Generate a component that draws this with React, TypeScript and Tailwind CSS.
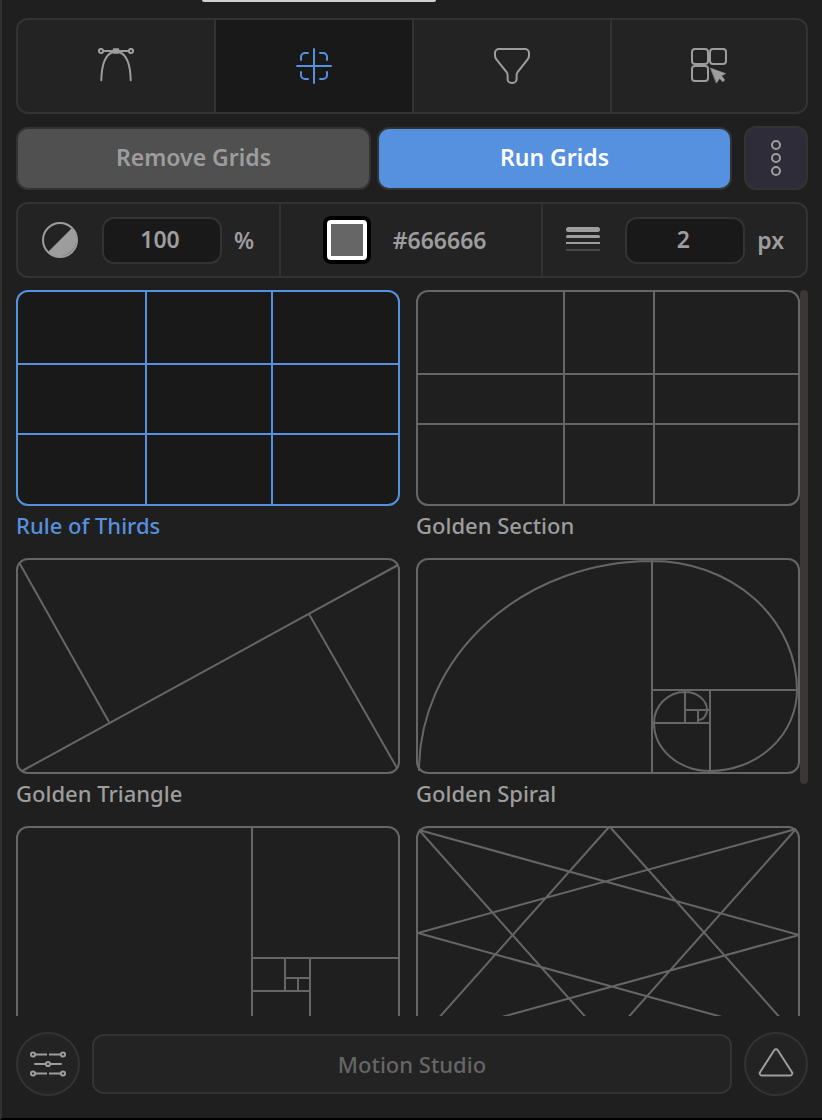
import { useState, type ReactNode } from 'react';
import clsx from 'clsx';

const stroke = { fill: 'none', stroke: 'currentColor', strokeWidth: 2, strokeLinecap: 'round', strokeLinejoin: 'round' } as const;

function Icon({ children }: { children: ReactNode }) {
  return (
    <svg viewBox="0 0 36 36" className="size-9 shrink-0" aria-hidden="true" {...stroke}>
      {children}
    </svg>
  );
}

const TABS = [
  {
    id: 'curves',
    label: 'Curves',
    icon: (
      <Icon>
        <path d="M5.5 3h25" />
        <circle cx="3" cy="3" r="2.1" />
        <circle cx="33" cy="3" r="2.1" />
        <rect x="15.8" y="1.2" width="4.4" height="3.6" />
        <path d="M3.3 32.2C3.6 17 7.5 6.5 15 4M32.7 32.2C32.4 17 28.5 6.5 21 4" />
      </Icon>
    ),
  },
  {
    id: 'grids',
    label: 'Grids',
    icon: (
      <Icon>
        <path d="M18 1v34M1 18h34" />
        <path d="M5 12V9a4 4 0 0 1 4-4h3M24 5h3a4 4 0 0 1 4 4v3M31 24v3a4 4 0 0 1-4 4h-3M12 31H9a4 4 0 0 1-4-4v-3" />
      </Icon>
    ),
  },
  {
    id: 'filter',
    label: 'Filter',
    icon: (
      <Icon>
        <path d="M5 1h26a4 4 0 0 1 4 4v2.5c0 1.5-.4 2.6-1.2 3.6L23.600 24.200c-.7.9-1 1.8-1 2.8v4a4 4 0 0 1-4 4h-1a4 4 0 0 1-4-4v-4c0-1-.3-1.9-1-2.8L2.200 11.100C1.400 10.100 1 9 1 7.500V5a4 4 0 0 1 4-4z" />
      </Icon>
    ),
  },
  {
    id: 'select',
    label: 'Select',
    icon: (
      <Icon>
        <rect x="1" y="1" width="16" height="15" rx="3" />
        <rect x="19" y="1" width="16" height="15" rx="3" />
        <rect x="1" y="18" width="16" height="15" rx="3" />
        <path
          d="M19.7 20.2 34.5 25.6 30.5 27.8 33.7 32 31.9 33.8 28.6 30.5 25.5 34.8z"
          fill="currentColor"
          strokeWidth="0.6"
        />
      </Icon>
    ),
  },
];

const GOLDEN_RECTS = 'M236 1V215M236 132H383M294 132V215M236 165H294M269 132V165M269 152H294M282 152V165';

const GRIDS = [
  { id: 'thirds', name: 'Rule of Thirds', d: 'M130 1V215M256 1V215M1 74H383M1 144H383' },
  { id: 'section', name: 'Golden Section', d: 'M148 1V215M238 1V215M1 84H383M1 134H383' },
  { id: 'triangle', name: 'Golden Triangle', d: 'M4 6L93 164M6 213L382 7M293 56L381 210' },
  {
    id: 'spiral',
    name: 'Golden Spiral',
    d:
      GOLDEN_RECTS +
      'M3 213A233 210 0 0 1 236 3A145 129 0 0 1 381 132A87 81 0 0 1 294 213A56 48 0 0 1 238 165A31 31 0 0 1 269 134A22 18 0 0 1 291 152A9 10 0 0 1 282 162',
  },
  { id: 'rectangles', d: GOLDEN_RECTS },
  {
    id: 'star',
    d: 'M3 4L383 109L6 213M380 3L2 107L382 212M193 1L4 213M194 1L383 213M3 4L190 214M380 3L192 214',
  },
];

function NumberField({ id, label, value, unit }: { id: string; label: string; value: number; unit: string }) {
  const [text, setText] = useState(String(value));
  return (
    <>
      <input
        id={id}
        aria-label={label}
        value={text}
        onChange={(e) => setText(e.target.value)}
        className="ml-6 h-[47px] w-[120px] rounded-xl border-2 border-[#333333] bg-[#191919] pr-1 pb-0.5 text-center outline-none"
      />
      <label htmlFor={id} className="ml-3">{unit}</label>
    </>
  );
}

export default function App() {
  const [tab, setTab] = useState('grids');
  const [grid, setGrid] = useState('thirds');

  return (
    <div className="relative flex h-screen flex-col border-b-2 border-l-2 border-b-black border-l-[#313131] bg-[#1f1f1f] px-3.5 pt-[18px] pb-[22px] font-['Noto_Sans',sans-serif] text-[22px] font-medium text-[#9d9d9d]">
      <div className="absolute top-0 left-[200px] h-0.5 w-[234px] rounded-b-sm bg-[#d0d0d0]" />

      <div role="tablist" className="grid h-24 shrink-0 grid-cols-4 rounded-xl bg-[#232323]">
        {TABS.map((item) => (
          <button
            key={item.id}
            role="tab"
            aria-label={item.label}
            aria-selected={tab === item.id}
            onClick={() => setTab(item.id)}
            className={clsx(
              'flex items-center justify-center border-y-2 border-l-2 border-[#333333] first:rounded-l-xl last:rounded-r-xl last:border-r-2',
              tab === item.id && 'bg-[#191919] text-[#5591de]',
            )}
          >
            {item.icon}
          </button>
        ))}
      </div>

      <div className="mt-3 flex shrink-0 items-end text-[23px] font-semibold">
        <button className="mr-1.5 h-[63px] flex-1 rounded-xl border-2 border-[#333333] bg-[#505050] pb-0.5">Remove Grids</button>
        <button className="mr-3 h-[63px] flex-1 rounded-xl border-2 border-[#333333] bg-[#5591de] pb-0.5 text-white">Run Grids</button>
        <button
          aria-label="More options"
          className="flex size-16 items-center justify-center rounded-xl border-2 border-[#333333] bg-[#2e2c38]"
        >
          <Icon>
            <circle cx="18" cy="5" r="4" />
            <circle cx="18" cy="18" r="4" />
            <circle cx="18" cy="31" r="4" />
          </Icon>
        </button>
      </div>

      <div className="mt-3 grid h-[76px] shrink-0 grid-cols-3 divide-x-2 divide-[#333333] rounded-xl border-2 border-[#333333] bg-[#232323] text-[23px] font-semibold">
        <div className="flex items-center pl-6">
          <Icon>
            <circle cx="18" cy="18" r="17" />
            <path d="M30 6A17 17 0 0 1 6 30z" fill="currentColor" stroke="none" />
          </Icon>
          <NumberField id="opacity" label="Opacity" value={100} unit="%" />
        </div>
        <div className="flex items-center pl-[42px]">
          <button aria-label="Line color" className="size-12 rounded-lg bg-black p-1">
            <span className="block size-full rounded-sm border-4 border-white bg-[#666666]" />
          </button>
          <span className="ml-[22px]">#666666</span>
        </div>
        <div className="flex items-center pl-[22px]">
          <Icon>
            <path d="M3.5 7.5h29" strokeWidth="5" />
            <path d="M2.5 14.5h31" strokeWidth="3" />
            <path d="M1 21h34" strokeLinecap="butt" />
            <path d="M1 28h34" stroke="#484848" strokeLinecap="butt" />
          </Icon>
          <NumberField id="thickness" label="Line thickness" value={2} unit="px" />
        </div>
      </div>

      <div className="mt-3 flex min-h-0 flex-1">
        <div className="grid flex-1 grid-cols-2 content-start gap-x-4 gap-y-3.5 overflow-y-auto [scrollbar-width:none]">
          {GRIDS.map((item) => (
            <button
              key={item.id}
              aria-label={item.name ?? item.id}
              aria-pressed={grid === item.id}
              onClick={() => setGrid(item.id)}
              className={clsx('text-left leading-[38px]', grid === item.id && 'text-[#5591de]')}
            >
              <svg
                viewBox="0 0 384 216"
                className={clsx('block w-full', grid === item.id ? 'text-[#5591de]' : 'text-[#666666]')}
                aria-hidden="true"
                {...stroke}
              >
                <rect x="1" y="1" width="382" height="214" rx="11" fill={grid === item.id ? '#191919' : 'none'} />
                <path d={item.d} strokeLinecap="butt" />
              </svg>
              {item.name}
            </button>
          ))}
        </div>
        <div className="w-2">
          <div className="h-[68%] rounded-full bg-[#3b3736]" />
        </div>
      </div>

      <div className="mt-4 flex shrink-0 items-center gap-3">
        <button
          aria-label="Settings"
          className="flex size-16 items-center justify-center rounded-full border-2 border-[#333333] bg-[#232323]"
        >
          <Icon>
            <circle cx="3" cy="8.5" r="2.1" />
            <path d="M5 8.5h12M19 8.5h12" strokeLinecap="butt" />
            <circle cx="33" cy="8.5" r="2.1" />
            <path d="M5 18h10M21 18h10" />
            <circle cx="18" cy="18" r="2.1" />
            <circle cx="3" cy="27.5" r="2.1" />
            <path d="M5 27.5h12M19 27.5h12" strokeLinecap="butt" />
            <circle cx="33" cy="27.5" r="2.1" />
          </Icon>
        </button>
        <button className="h-[60px] flex-1 rounded-xl border-2 border-[#333333] bg-[#232323] text-[#666666]">Motion Studio</button>
        <button
          aria-label="Expand"
          className="flex size-16 items-center justify-center rounded-full border-2 border-[#333333] bg-[#232323]"
        >
          <Icon>
            <path d="M16.2 4.2a2.2 2.2 0 0 1 3.6 0L34 26.2a2.2 2.2 0 0 1-1.8 3.3H3.8A2.2 2.2 0 0 1 2 26.2z" />
          </Icon>
        </button>
      </div>
    </div>
  );
}
